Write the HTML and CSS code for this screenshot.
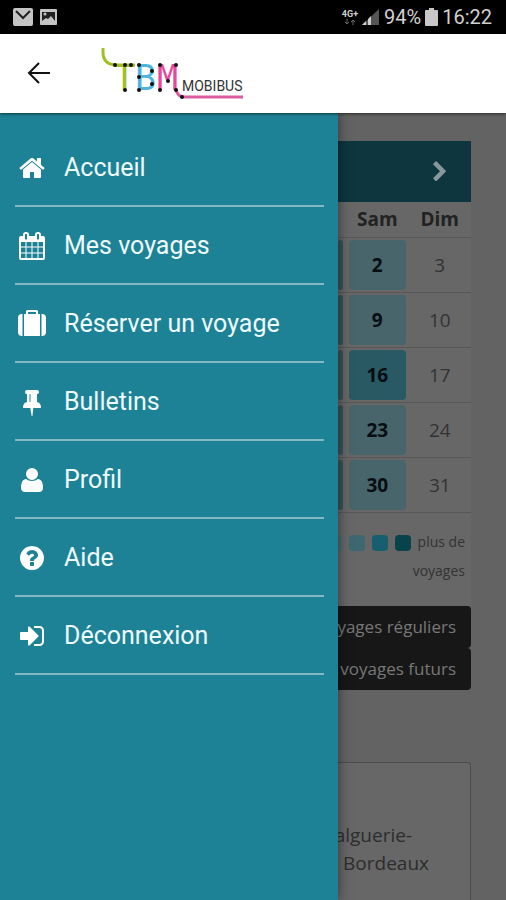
FILE: index.html
```html
<!DOCTYPE html>
<html lang="fr">
<head>
<meta charset="utf-8">
<meta name="viewport" content="width=device-width, initial-scale=1">
<title>TBM Mobibus</title>
<link rel="stylesheet" href="styles.css">
</head>
<body>
<div class="status">
  <div class="status-group">
    <svg class="status-icon" viewBox="0 0 20 18"><rect width="20" height="18" rx="2" fill="#c4c4c4"/><path d="M3 3l7 7 7-7" fill="none" stroke="#222" stroke-width="2"/></svg>
    <svg class="status-icon" viewBox="0 0 20 18"><rect x="1" y="1" width="17" height="16" rx="1" fill="#c4c4c4"/><path d="M3 4h13v9l-4-5-3 3-2-1-4 3z" fill="#222"/><circle cx="6" cy="6" r="1.5" fill="#c4c4c4"/></svg>
  </div>
  <div class="status-group status-right">
    <div class="network"><span>4G+</span><svg viewBox="0 0 12 6"><path d="M3 0v5M1 3l2 2 2-2M9 6V1M7 3l2-2 2 2" fill="none" stroke="#666" stroke-width="1"/></svg></div>
    <svg class="signal" viewBox="0 0 18 18"><path d="M0 17L17 1v16z" fill="#555"/><path d="M0 17l4-4v4zM6 17v-6l3-3v9z" fill="#d0d0d0"/></svg>
    <span class="battery-level">94%</span>
    <svg class="battery" viewBox="0 0 13 18"><path d="M4 0h5v2h3q1 0 1 1v14q0 1-1 1H1q-1 0-1-1V3q0-1 1-1h3z" fill="#c8c8c8"/></svg>
    <time>16:22</time>
  </div>
</div>

<header class="topbar">
  <button class="back" type="button" aria-label="Retour"><svg viewBox="0 0 24 24"><path d="M23 11H2M12 1L2 11l10 10" fill="none" stroke="#111" stroke-width="2"/></svg></button>
  <svg class="logo" viewBox="0 0 144 54" role="img" aria-label="TBM Mobibus">
    <path d="M2 1v4q0 13 14 13h18" fill="none" stroke="#a2bf22" stroke-width="3"/>
    <text class="logo-big" x="13" y="43" fill="#a2bf22">T</text>
    <text class="logo-big" x="34" y="43" fill="#4cb4dd">B</text>
    <text class="logo-big" x="56" y="43" fill="#e6499b">M</text>
    <path d="M75 42q1 8 9 8h58" fill="none" stroke="#dd5b9f" stroke-width="3"/>
    <text class="logo-small" x="81" y="44">MOBIBUS</text>
    <g fill="#111"><circle cx="14" cy="18" r="2"/><circle cx="24" cy="18" r="2"/><circle cx="30" cy="18" r="2"/><circle cx="24" cy="43" r="2"/><circle cx="38" cy="18" r="2"/><circle cx="38" cy="30" r="2"/><circle cx="38" cy="43" r="2"/><circle cx="51" cy="24" r="2"/><circle cx="51" cy="37" r="2"/><circle cx="59" cy="18" r="2"/><circle cx="59" cy="43" r="2"/><circle cx="67" cy="34" r="2"/><circle cx="75" cy="18" r="2"/><circle cx="75" cy="43" r="2"/><circle cx="81" cy="50" r="2"/></g>
  </svg>
</header>

<div class="layout">
  <nav class="drawer">
    <a href="#"><svg viewBox="0 0 1792 1792"><path d="M1472 992v480q0 26-19 45t-45 19h-384v-384h-256v384h-384q-26 0-45-19t-19-45v-480q0-1 .5-3t.5-3l575-474 575 474q1 2 1 6zm223-69l-62 74q-8 9-21 11h-3q-13 0-21-7l-692-577-692 577q-12 8-24 7-13-2-21-11l-62-74q-8-10-7-23.5t11-21.5l719-599q32-26 76-26t76 26l244 204v-195q0-14 9-23t23-9h192q14 0 23 9t9 23v408l219 182q10 8 11 21.5t-7 23.5z"/></svg>Accueil</a>
    <a href="#"><svg viewBox="0 0 1792 1792"><path d="M192 1664h288v-288h-288v288zm352 0h320v-288h-320v288zm-352-352h288v-320h-288v320zm352 0h320v-320h-320v320zm-352-384h288v-288h-288v288zm736 736h320v-288h-320v288zm-384-736h320v-288h-320v288zm768 736h288v-288h-288v288zm-384-352h320v-320h-320v320zm-352-864v-288q0-13-9.5-22.5t-22.5-9.5h-64q-13 0-22.5 9.5t-9.5 22.5v288q0 13 9.500 22.500t22.500 9.500h64q13 0 22.500-9.500t9.500-22.500zm736 864h288v-320h-288v320zm-384-384h320v-288h-320v288zm384 0h288v-288h-288v288zm32-480v-288q0-13-9.500-22.500t-22.500-9.500h-64q-13 0-22.500 9.500t-9.500 22.500v288q0 13 9.500 22.500t22.500 9.500h64q13 0 22.500-9.500t9.500-22.500zm384-64v1280q0 52-38 90t-90 38h-1408q-52 0-90-38t-38-90v-1280q0-52 38-90t90-38h128v-96q0-66 47-113t113-47h64q66 0 113 47t47 113v96h384v-96q0-66 47-113t113-47h64q66 0 113 47t47 113v96h128q52 0 90 38t38 90z"/></svg>Mes voyages</a>
    <a href="#"><svg viewBox="0 0 1792 1792"><path d="M640 256h512v-128h-512v128zm-352 0v1408h-64q-92 0-158-66t-66-158v-960q0-92 66-158t158-66h64zm1120 0v1408h-1024v-1408h128v-160q0-40 28-68t68-28h576q40 0 68 28t28 68v160h128zm384 224v960q0 92-66 158t-158 66h-64v-1408h64q92 0 158 66t66 158z"/></svg>Réserver un voyage</a>
    <a href="#"><svg viewBox="0 0 1792 1792"><path d="M800 864v-448q0-14-9-23t-23-9-23 9-9 23v448q0 14 9 23t23 9 23-9 9-23zm672 352q0 26-19 45t-45 19h-429l-51 483q-2 12-10.500 20.500t-20.500 8.500h-1q-27 0-32-27l-76-485h-404q-26 0-45-19t-19-45q0-123 78.500-221.500t177.500-98.500v-512q-52 0-90-38t-38-90 38-90 90-38h640q52 0 90 38t38 90-38 90-90 38v512q99 0 177.500 98.500t78.500 221.500z"/></svg>Bulletins</a>
    <a href="#"><svg viewBox="0 0 1792 1792"><path d="M1600 1405q0 120-73 189.500t-194 69.500h-874q-121 0-194-69.500t-73-189.500q0-85 8.500-160.500t31.500-152 58.500-131 94-89 134.500-34.500q131 128 377 128t377-128q76 0 134.500 34.500t94 89 58.500 131 31.500 152 8.500 160.500zm-320-893q0 159-112.500 271.500t-271.500 112.500-271.500-112.500-112.500-271.500 112.500-271.500 271.500-112.500 271.500 112.500 112.500 271.500z"/></svg>Profil</a>
    <a href="#"><svg viewBox="0 0 1792 1792"><path d="M1024 1376v-192q0-14-9-23t-23-9h-192q-14 0-23 9t-9 23v192q0 14 9 23t23 9h192q14 0 23-9t9-23zm256-672q0-88-55.500-163t-138.500-116-170-41q-243 0-371 213-15 24 8 42l132 100q7 6 19 6 16 0 25-12 53-68 86-92 34-24 86-24 48 0 85.500 26t37.500 59q0 38-20 61t-68 45q-63 28-115.500 86.500t-52.500 125.500v36q0 14 9 23t23 9h192q14 0 23-9t9-23q0-19 21.500-49.500t54.500-49.500q32-18 49-28.500t46-35 44.500-48 28-60.500 12.500-81zm384 192q0 209-103 385.500t-279.500 279.500-385.500 103-385.500-103-279.500-279.500-103-385.500 103-385.500 279.500-279.500 385.500-103 385.500 103 279.500 279.500 103 385.500z"/></svg>Aide</a>
    <a href="#"><svg viewBox="0 0 1792 1792"><path d="M1312 896q0 26-19 45l-544 544q-19 19-45 19t-45-19-19-45v-288h-448q-26 0-45-19t-19-45v-384q0-26 19-45t45-19h448v-288q0-26 19-45t45-19 45 19l544 544q19 19 19 45zm352-352v704q0 119-84.500 203.500t-203.500 84.500h-320q-13 0-22.500-9.500t-9.500-22.500q0-4-1-20t-.5-26.500 3-23.500 10-19.500 20.500-6.500h320q66 0 113-47t47-113v-704q0-66-47-113t-113-47h-312l-11.500-1-11.500-3-8-5.500-7-9-2-13.500q0-4-1-20t-.5-26.500 3-23.500 10-19.500 20.500-6.500h320q119 0 203.500 84.500t84.500 203.500z"/></svg>Déconnexion</a>
  </nav>

  <main class="content">
    <section class="calendar">
      <div class="month"><button class="next" type="button" aria-label="Mois suivant"><svg viewBox="0 0 1792 1792"><path d="M1363 877l-742 742q-19 19-45 19t-45-19l-166-166q-19-19-19-45t19-45l531-531-531-531q-19-19-19-45t19-45l166-166q19-19 45-19t45 19l742 742q19 19 19 45t-19 45z"/></svg></button></div>
      <table>
        <thead><tr><th class="edge"></th><th>Sam</th><th>Dim</th></tr></thead>
        <tbody>
          <tr><td class="edge"><span class="day mid"></span></td><td><span class="day low">2</span></td><td>3</td></tr>
          <tr><td class="edge"><span class="day mid"></span></td><td><span class="day low">9</span></td><td>10</td></tr>
          <tr><td class="edge"><span class="day mid"></span></td><td><span class="day high">16</span></td><td>17</td></tr>
          <tr><td class="edge"><span class="day mid"></span></td><td><span class="day low">23</span></td><td>24</td></tr>
          <tr><td class="edge"><span class="day mid"></span></td><td><span class="day low">30</span></td><td>31</td></tr>
        </tbody>
      </table>
      <p class="legend"><i class="l1"></i><i class="l2"></i><i class="l3"></i><i class="l4"></i>plus de<br>voyages</p>
    </section>
    <div class="actions">
      <button type="button">yages réguliers</button>
      <button type="button">voyages futurs</button>
    </div>
    <section class="trip">
      <p><span>alguerie-</span><span class="city">Bordeaux</span></p>
    </section>
  </main>
</div>
</body>
</html>
```
FILE: styles.css
```css
* { box-sizing: border-box; }
body {
  margin: 0;
  min-height: 100vh;
  display: flex;
  flex-direction: column;
  background: #636363;
  font-family: "Open Sans", sans-serif;
}
button { border: 0; margin: 0; font: inherit; }
p { margin: 0; }

.status {
  display: flex;
  justify-content: space-between;
  align-items: center;
  height: 34px;
  padding: 0 14px 0 13px;
  background: #000;
  color: #d0d0d0;
  font: 20px Roboto, sans-serif;
}
.status-group { display: flex; align-items: center; gap: 6px; }
.status-right { gap: 4px; }
.status-icon { width: 20px; height: 18px; }
.network {
  display: flex;
  flex-direction: column;
  align-items: center;
  font: bold 9px/9px Roboto, sans-serif;
}
.network svg { width: 12px; height: 6px; }
.signal { width: 18px; height: 18px; }
.battery { width: 13px; height: 18px; }

.topbar {
  display: flex;
  align-items: center;
  gap: 50px;
  height: 79px;
  padding-left: 27px;
  background: #fff;
  position: relative;
  z-index: 2;
  box-shadow: 0 1px 3px rgba(0, 0, 0, .6);
}
.back { display: flex; padding: 0; background: none; }
.back svg { width: 24px; height: 24px; }
.logo { width: 144px; height: 54px; }
.logo-big { font: 35px "DejaVu Sans Mono", monospace; }
.logo-small { font: 14px Roboto, sans-serif; fill: #333; }

.layout {
  flex: 1;
  display: grid;
  grid-template-columns: 338fr 168fr;
}
.drawer {
  padding: 16px 14px 0 15px;
  background: #1d8296;
  z-index: 1;
  box-shadow: 0 0 12px rgba(0, 0, 0, .5);
}
.drawer a {
  display: flex;
  align-items: center;
  gap: 18px;
  height: 78px;
  padding: 1px 3px 0;
  border-bottom: 2px solid #84b9c4;
  color: #eefafc;
  font: 25px Roboto, sans-serif;
  text-decoration: none;
}
.drawer svg { width: 28px; height: 28px; fill: #fff; }

.content {
  display: flex;
  flex-direction: column;
  min-width: 0;
  padding: 28px 35px 0 0;
  overflow: hidden;
}
.calendar { background: #676767; color: #333; }
.month {
  display: flex;
  justify-content: flex-end;
  align-items: center;
  height: 61px;
  padding-right: 20px;
  background: #0d363e;
}
.next { display: flex; padding: 0; background: none; }
.next svg { width: 22px; height: 22px; fill: #8a979a; }
table {
  width: 100%;
  border-collapse: collapse;
  table-layout: fixed;
  font-size: 19px;
  text-align: center;
}
th { height: 35px; padding: 0; color: #222; }
td { height: 55px; padding: 2px 3px; border: solid #575757; border-width: 1px 0; color: #333; }
.edge { width: 8px; padding-left: 0; }
.day {
  display: block;
  height: 50px;
  border-radius: 4px;
  color: #080d12;
  font-weight: bold;
  line-height: 50px;
}
.low { background: #47656b; }
.mid { background: #3b5257; }
.high { background: #295963; }
.legend {
  height: 93px;
  margin-left: -24px;
  padding: 14px 6px 0 0;
  font-size: 14px;
  line-height: 29px;
  text-align: right;
  white-space: nowrap;
}
.legend i {
  display: inline-block;
  width: 16px;
  height: 16px;
  margin-right: 7px;
  border-radius: 4px;
  vertical-align: middle;
}
.l1 { background: #4f6a70; }
.l2 { background: #3d686f; }
.l3 { background: #175f6e; }
.l4 { background: #07434b; }

.actions { display: flex; flex-direction: column; }
.actions button {
  display: flex;
  justify-content: flex-end;
  align-items: center;
  height: 42px;
  padding: 0 15px 0 0;
  border-radius: 0 4px 4px 0;
  background: #171717;
  color: #777;
  font-size: 17px;
  white-space: nowrap;
}
.trip {
  flex: 1;
  margin-top: 72px;
  padding: 58px 41px 0 0;
  border: solid #4c4c4c;
  border-width: 1px 1px 0 0;
  border-radius: 0 3px 0 0;
  background: #676767;
  color: #2d2d2d;
  font-size: 19px;
  line-height: 28px;
}
.trip p { display: flex; flex-direction: column; align-items: flex-end; }
.trip span:first-child { padding-right: 17px; }
```
